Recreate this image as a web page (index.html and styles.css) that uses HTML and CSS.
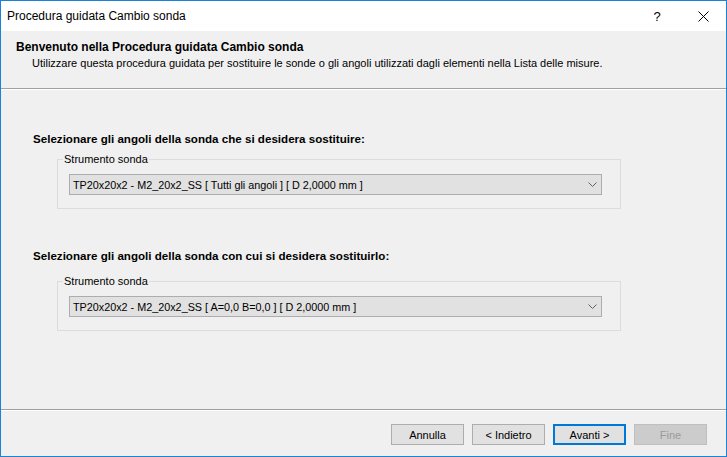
FILE: index.html
```html
<!DOCTYPE html>
<html>
<head>
<meta charset="utf-8">
<link rel="stylesheet" href="styles.css">
</head>
<body>
<div class="window">
  <div class="titlebar">
    <span class="title">Procedura guidata Cambio sonda</span>
    <div class="caption">
      <span class="cap-btn help">?</span>
      <span class="cap-btn close"><svg width="11" height="11" viewBox="0 0 11 11"><path d="M0.5 0.5 L10.5 10.5 M10.5 0.5 L0.5 10.5" stroke="#000" stroke-width="1" fill="none"/></svg></span>
    </div>
  </div>
  <div class="header">
    <div class="h-title">Benvenuto nella Procedura guidata Cambio sonda</div>
    <div class="h-sub">Utilizzare questa procedura guidata per sostituire le sonde o gli angoli utilizzati dagli elementi nella Lista delle misure.</div>
  </div>
  <div class="content">
    <div class="label label-first">Selezionare gli angoli della sonda che si desidera sostituire:</div>
    <fieldset class="group group-first">
      <legend>Strumento sonda</legend>
      <div class="combo">
        <span class="combo-text">TP20x20x2 - M2_20x2_SS [ Tutti gli angoli ] [ D 2,0000 mm ]</span>
        <svg class="chev" width="9" height="5" viewBox="0 0 9 5"><path d="M0.5 0.5 L4.5 4.5 L8.5 0.5" stroke="#606060" stroke-width="1" fill="none"/></svg>
      </div>
    </fieldset>
    <div class="label label-second">Selezionare gli angoli della sonda con cui si desidera sostituirlo:</div>
    <fieldset class="group group-second">
      <legend>Strumento sonda</legend>
      <div class="combo">
        <span class="combo-text">TP20x20x2 - M2_20x2_SS [ A=0,0 B=0,0 ] [ D 2,0000 mm ]</span>
        <svg class="chev" width="9" height="5" viewBox="0 0 9 5"><path d="M0.5 0.5 L4.5 4.5 L8.5 0.5" stroke="#606060" stroke-width="1" fill="none"/></svg>
      </div>
    </fieldset>
  </div>
  <div class="footer">
    <button class="btn">Annulla</button>
    <button class="btn">&lt; Indietro</button>
    <button class="btn btn-default">Avanti &gt;</button>
    <button class="btn btn-disabled">Fine</button>
  </div>
</div>
</body>
</html>
```
FILE: styles.css
```css
html, body {
  margin: 0;
  padding: 0;
  background: #f0f0f0;
}
body {
  font-family: "Liberation Sans", Arial, sans-serif;
  font-size: 12px;
  color: #000;
}
.window {
  width: 727px;
  height: 457px;
  box-sizing: border-box;
  border: 1px solid #1883d7;
  background: #f0f0f0;
  display: flex;
  flex-direction: column;
}
.titlebar {
  height: 30px;
  background: #fff;
  display: flex;
  align-items: center;
  justify-content: space-between;
  flex: none;
}
.title {
  padding-left: 6px;
  line-height: 16px;
}
.caption {
  display: flex;
  height: 30px;
}
.cap-btn {
  width: 46px;
  height: 30px;
  display: flex;
  align-items: center;
  justify-content: center;
}
.help {
  font-size: 13px;
}
.header {
  flex: none;
  height: 58px;
  box-sizing: border-box;
  padding: 8px 0 0 15px;
  border-bottom: 1px solid #a0a0a0;
  box-shadow: 0 1px 0 #ffffff;
}
.h-title {
  font-weight: bold;
  line-height: 16px;
}
.h-sub {
  font-size: 11px;
  line-height: 16px;
  padding-left: 16px;
}
.content {
  flex: 1;
  padding: 42px 0 0 32px;
}
.label {
  font-weight: bold;
  font-size: 11.6px;
  line-height: 16px;
}
.label-second {
  margin-top: 39px;
}
.group {
  margin: 4px 0 0 24px;
  width: 564px;
  box-sizing: border-box;
  border: 1px solid #dcdcdc;
  padding: 7px 18px 13px 5px;
}
.group-second {
  margin-top: 9px;
}
.group legend {
  padding: 0 1px;
  font-size: 11px;
  line-height: 16px;
}
.combo {
  margin-left: 6px;
  height: 21px;
  box-sizing: border-box;
  border: 1px solid #adadad;
  background: #e1e1e1;
  display: flex;
  align-items: center;
  justify-content: space-between;
  padding: 0 4px 0 3px;
}
.combo-text {
  font-size: 10.8px;
  line-height: 16px;
}
.chev {
  display: block;
}
.footer {
  flex: none;
  height: 47px;
  box-sizing: border-box;
  border-top: 1px solid #a0a0a0;
  box-shadow: inset 0 1px 0 #ffffff;
  display: flex;
  justify-content: flex-end;
  gap: 8px;
  padding: 14px 19px 0 0;
}
.btn {
  width: 73px;
  height: 21px;
  box-sizing: border-box;
  border: 1px solid #adadad;
  background: #e1e1e1;
  font-family: "Liberation Sans", Arial, sans-serif;
  font-size: 11px;
  color: #000;
  padding: 0;
  margin: 0;
}
.btn-default {
  border: 2px solid #0078d7;
}
.btn-disabled {
  background: #cccccc;
  border-color: #bfbfbf;
  color: #9a9a9a;
}
```
